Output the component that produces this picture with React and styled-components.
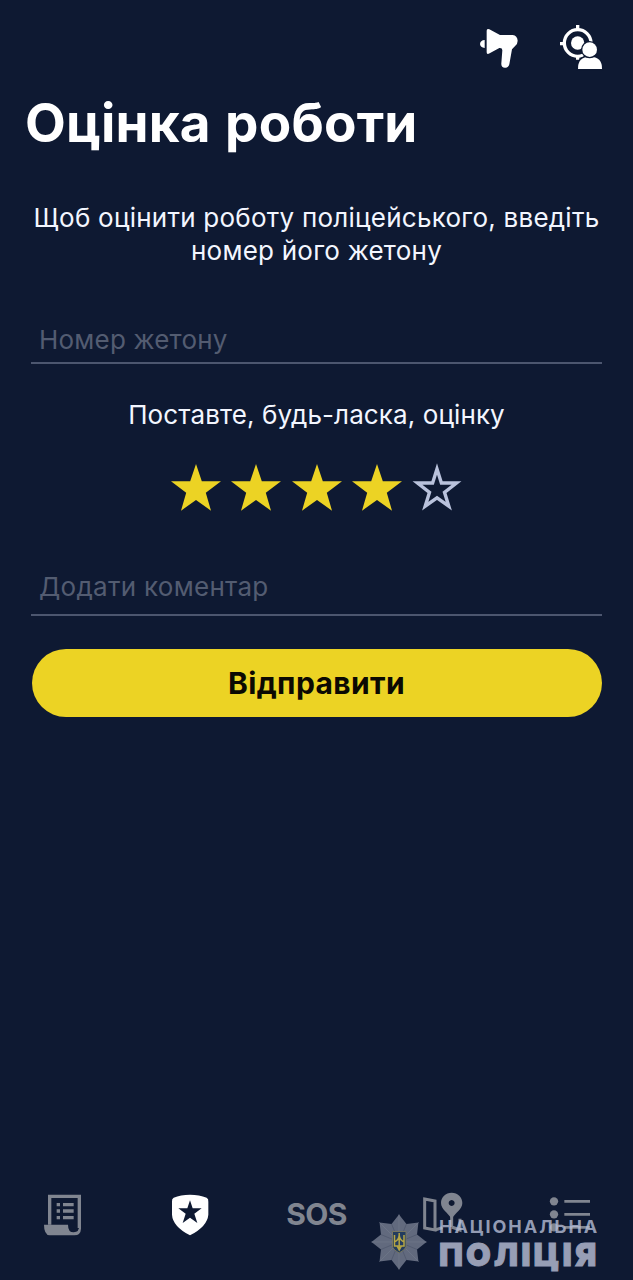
import React from 'react';
import styled, { createGlobalStyle } from 'styled-components';

const GlobalStyle = createGlobalStyle`
  * { box-sizing: border-box; }
  body { margin: 0; background: #0e1932; }
`;

const Screen = styled.main`
  position: relative;
  display: flex;
  flex-direction: column;
  width: 633px;
  height: 1280px;
  overflow: hidden;
  background: #0e1932;
  color: #f3f6ff;
  font-family: Inter, 'Liberation Sans', sans-serif;
`;

const Toolbar = styled.header`
  display: flex;
  justify-content: flex-end;
  align-items: flex-start;
  gap: 38px;
  height: 91px;
  padding: 23px 29px 0 0;
  svg { display: block; }
`;

const Megaphone = styled.svg`
  width: 42px;
  height: 42px;
  margin-top: 4px;
`;

const Title = styled.h1`
  margin: 0;
  padding-left: 25px;
  height: 64px;
  line-height: 64px;
  font-size: 53px;
  font-weight: 700;
  letter-spacing: ${(p) => p.$tracking}px;
  word-spacing: 1.5px;
  color: #fff;
  white-space: nowrap;
`;

const Form = styled.form`
  display: flex;
  flex-direction: column;
  padding: 0 31px;
`;

const Intro = styled.p`
  margin: 46px -10px 0;
  text-align: center;
  font-size: 26px;
  line-height: 33px;
  letter-spacing: ${(p) => p.$tracking}px;
  white-space: nowrap;
`;

const Field = styled.input`
  width: 571px;
  height: ${(p) => p.$height}px;
  margin-top: ${(p) => p.$top}px;
  padding: 2px 8px 0;
  border: 0;
  border-bottom: 2px solid #4c566f;
  border-radius: 0;
  outline: 0;
  background: transparent;
  color: #f3f6ff;
  font: 400 26px Inter, 'Liberation Sans', sans-serif;
  letter-spacing: ${(p) => p.$tracking}px;
  &::placeholder { color: #535c71; opacity: 1; }
`;

const Prompt = styled.p`
  margin: 34px 0 0;
  height: 33px;
  text-align: center;
  font-size: 26px;
  line-height: 33px;
  letter-spacing: ${(p) => p.$tracking}px;
`;

const Rating = styled.div`
  display: flex;
  justify-content: center;
  gap: 8.3px;
  height: 52px;
  margin-top: 31px;
`;

const StarIcon = styled.svg`
  width: 52px;
  height: 52px;
  fill: ${(p) => (p.$filled ? '#ecd324' : 'none')};
  stroke: ${(p) => (p.$filled ? 'none' : '#b9c2dc')};
  stroke-width: 3.4;
`;

const Submit = styled.button`
  width: 570px;
  height: 68px;
  margin: 33px 0 0 0.5px;
  padding: 0;
  border: 0;
  border-radius: 34px;
  background: #ecd324;
  color: #0b0902;
  font: 650 30px Inter, 'Liberation Sans', sans-serif;
  letter-spacing: ${(p) => p.$tracking}px;
`;

const TabBar = styled.nav`
  display: flex;
  height: 130px;
  margin-top: auto;
  padding-top: 42px;
`;

const Tab = styled.a`
  flex: 1;
  display: flex;
  justify-content: center;
  align-items: flex-start;
  color: ${(p) => (p.$active ? '#fff' : '#808590')};
  svg { display: block; }
`;

const SosLabel = styled.span`
  line-height: 44px;
  font-size: 30px;
  font-weight: 700;
  letter-spacing: -0.6px;
`;

const Watermark = styled.div`
  position: absolute;
  left: 371px;
  top: 1213px;
  display: flex;
  align-items: flex-start;
  color: rgba(185, 192, 216, 0.8);
  font-family: Inter, 'Liberation Sans', sans-serif;
`;

const Wordmark = styled.div`
  margin-left: 12px;
  white-space: nowrap;
`;

const SmallWord = styled.div`
  height: 26px;
  line-height: 28px;
  font-size: 18px;
  font-weight: 700;
  letter-spacing: ${(p) => p.$tracking}px;
`;

const BigWord = styled.div`
  height: 32px;
  line-height: 32px;
  font-size: 32px;
  font-weight: 900;
  -webkit-text-stroke: 1px rgb(151, 158, 181);
  color: rgb(151, 158, 181);
  letter-spacing: ${(p) => p.$tracking}px;
`;

const starPath = 'M26 2 L31.8 19.3 L51 19.3 L35.8 30.7 L41 48.7 L26 38 L11 48.7 L16.2 30.7 L1 19.3 L20.2 19.3 Z';
const hollowPath = 'M26 7 L30.4 21 L45.5 21 L33.5 30.3 L37.8 44.2 L26 35.8 L14.2 44.2 L18.5 30.3 L6.5 21 L21.6 21 Z';

function Star({ filled }) {
  return (
    <StarIcon viewBox="0 0 52 52" $filled={filled}>
      <path d={filled ? starPath : hollowPath} />
    </StarIcon>
  );
}

const rays = Array.from({ length: 16 }, (_, i) => {
  const angle = (i * Math.PI) / 8 - Math.PI / 2;
  const r = i % 2 ? 19.5 : 27.5;
  return [28 + r * Math.cos(angle), 29 + r * Math.sin(angle)];
});

function Emblem() {
  return (
    <svg width="56" height="58" viewBox="0 0 56 58">
      <polygon points={rays.map((p) => p.join(',')).join(' ')} fill="#626a7e" />
      {rays.map(([x, y], i) => (
        <line key={i} x1="28" y1="29" x2={x} y2={y} stroke={i % 2 ? '#4f586d' : '#6f7789'} strokeWidth="0.8" />
      ))}
      <path d="M21.5 18.5 H35 V34 Q34 37 28.2 40 Q22.5 37 21.5 34 Z" fill="#233c5e" stroke="#777661" />
      <path d="M23.5 22 V33 H33 V22 M28.2 20 V37 M23.5 29 Q28 27 28.2 22 Q28.5 27 33 29 M26 33 L28.2 37 L30.5 33" fill="none" stroke="#b5a545" strokeWidth="1.5" />
    </svg>
  );
}

export default function App() {
  return (
    <>
      <GlobalStyle />
      <Screen>
        <Toolbar>
          <Megaphone viewBox="24 36 126 126" fill="#fff">
            <path d="M44 75 V99 Q31 98 30 87 Q31 76 44 75 Z" />
            <path d="M50 47 Q50 40 58 43 L90 60 H128 Q142 62 143 77 Q143 86 136 92 L126 103 L118 148 Q115 159 105 158 Q93 157 94 145 L97 106 Q97 98 88 99 L59 115 Q50 120 50 112 Z" />
          </Megaphone>
          <svg width="46" height="48" viewBox="264 24 138 144">
            <circle cx="323" cy="84" r="40" fill="none" stroke="#fff" strokeWidth="10" />
            <path d="M323 30 V44 M270 86 H283 M323 124 V134" stroke="#fff" strokeWidth="10" />
            <circle cx="323" cy="84" r="20" fill="#fff" />
            <path d="M324 162 Q323 125 360 125 Q397 125 396 162 Z" fill="#fff" stroke="#0e1932" strokeWidth="8" paintOrder="stroke" />
            <circle cx="359" cy="104" r="22" fill="#fff" stroke="#0e1932" strokeWidth="8" paintOrder="stroke" />
          </svg>
        </Toolbar>
        <Title $tracking={0.2}>Оцінка роботи</Title>
        <Form onSubmit={(e) => e.preventDefault()}>
          <Intro $tracking={0.24}>
            Щоб оцінити роботу поліцейського, введіть
            <br />
            номер його жетону
          </Intro>
          <Field $height={49} $top={48} $tracking={0.2} placeholder="Номер жетону" />
          <Prompt $tracking={0.1}>Поставте, будь-ласка, оцінку</Prompt>
          <Rating>
            <Star filled />
            <Star filled />
            <Star filled />
            <Star filled />
            <Star />
          </Rating>
          <Field $height={60} $top={42} $tracking={0.28} placeholder="Додати коментар" />
          <Submit $tracking={0.4}>Відправити</Submit>
        </Form>
        <TabBar>
          <Tab>
            <svg width="40" height="46" viewBox="0 0 120 138" fill="none" stroke="currentColor" strokeWidth="10">
              <path d="M20 98 V13 H109 V108" />
              <path d="M3 98 H75 Q75 121 92 121 Q109 121 109 100 L114 100 V110 Q113 130 94 130 H20 Q3 128 3 98 Z" fill="currentColor" stroke="none" />
              <path d="M41 38 H51 M60 38 H92 M41 57 H51 M60 57 H92 M41 77 H51 M60 77 H92" />
            </svg>
          </Tab>
          <Tab $active>
            <svg width="38" height="46" viewBox="421 36 114 138">
              <path d="M478 44 Q506 44 528 53 Q534 56 533 65 V104 Q530 139 478 166 Q426 139 424 104 V65 Q423 56 429 53 Q450 44 478 44 Z" fill="#fff" />
              <path d="M478 61 L486 85 H513 L491 101 L500 129 L478 113 L456 129 L465 101 L443 85 H470 Z" fill="#0e1932" />
            </svg>
          </Tab>
          <Tab><SosLabel>SOS</SosLabel></Tab>
          <Tab>
            <svg width="40" height="46" viewBox="189 45 120 138" fill="none" stroke="currentColor" strokeWidth="9">
              <path d="M194 66 L225 72 V159 L194 153 Z M225 159 L247 152 M275 150 V115 M275 150 L300 159 V125" />
              <path d="M275 47 C257 47 243 60 243 78 C243 97 264 107 275 126 C286 107 307 97 307 78 C307 60 293 47 275 47 Z M275 69 A9 9 0 1 1 274.9 69 Z" fill="currentColor" fillRule="evenodd" stroke="none" />
            </svg>
          </Tab>
          <Tab>
            <svg width="42" height="46" viewBox="358 21 126 138" fill="currentColor">
              <circle cx="373" cy="49" r="12.5" />
              <circle cx="373" cy="88" r="12.5" />
              <circle cx="373" cy="127" r="12.5" />
              <path d="M404 45 H481 V53 H404 Z M404 84 H481 V92 H404 Z M404 123 H481 V131 H404 Z" />
            </svg>
          </Tab>
        </TabBar>
        <Watermark>
          <Emblem />
          <Wordmark>
            <SmallWord $tracking={1.95}>НАЦІОНАЛЬНА</SmallWord>
            <BigWord $tracking={3.1}>ПОЛІЦІЯ</BigWord>
          </Wordmark>
        </Watermark>
      </Screen>
    </>
  );
}
